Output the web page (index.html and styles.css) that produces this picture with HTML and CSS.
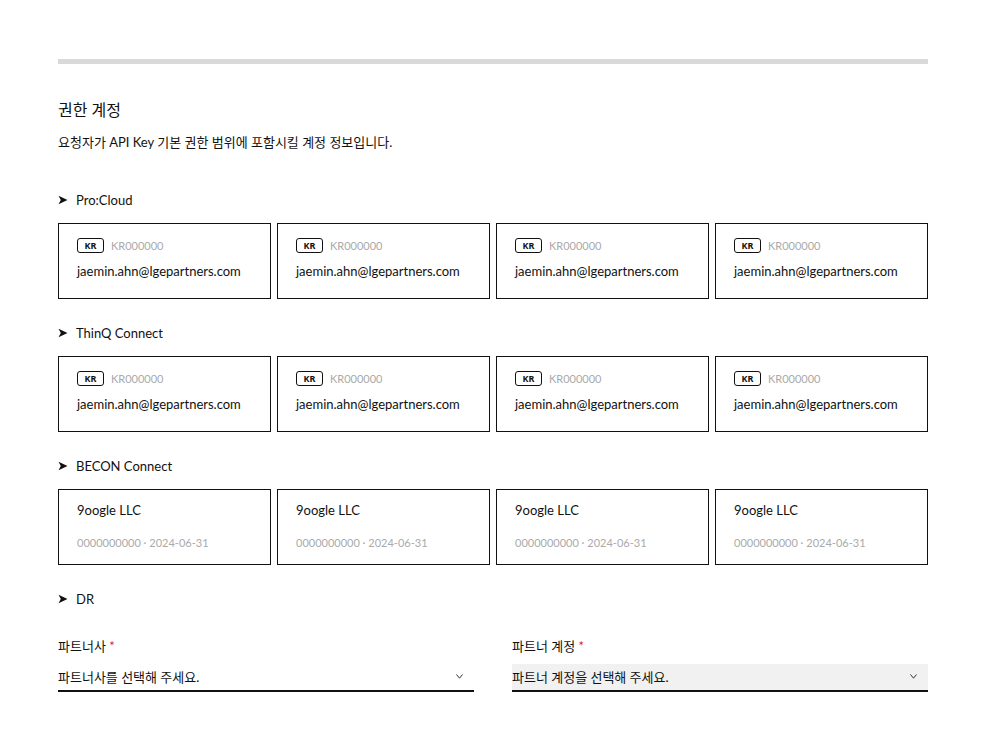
FILE: index.html
```html
<!DOCTYPE html>
<html lang="ko">
<head>
<meta charset="utf-8">
<link rel="stylesheet" href="styles.css">
</head>
<body>
<div class="page">
  <div class="topbar"></div>
  <h2 class="title">권한 계정</h2>
  <p class="desc">요청자가 API Key 기본 권한 범위에 포함시킬 계정 정보입니다.</p>

  <section class="group">
    <div class="group-label"><svg class="arrow" viewBox="0 0 10 10"><path d="M0.5 0.8 L9.5 5 L0.5 9.2 L2.8 5 Z"/></svg>Pro:Cloud</div>
    <div class="cards">
      <div class="card"><div class="meta-row"><span class="badge">KR</span><span class="code">KR000000</span></div><div class="email">jaemin.ahn@lgepartners.com</div></div>
      <div class="card"><div class="meta-row"><span class="badge">KR</span><span class="code">KR000000</span></div><div class="email">jaemin.ahn@lgepartners.com</div></div>
      <div class="card"><div class="meta-row"><span class="badge">KR</span><span class="code">KR000000</span></div><div class="email">jaemin.ahn@lgepartners.com</div></div>
      <div class="card"><div class="meta-row"><span class="badge">KR</span><span class="code">KR000000</span></div><div class="email">jaemin.ahn@lgepartners.com</div></div>
    </div>
  </section>

  <section class="group">
    <div class="group-label"><svg class="arrow" viewBox="0 0 10 10"><path d="M0.5 0.8 L9.5 5 L0.5 9.2 L2.8 5 Z"/></svg>ThinQ Connect</div>
    <div class="cards">
      <div class="card"><div class="meta-row"><span class="badge">KR</span><span class="code">KR000000</span></div><div class="email">jaemin.ahn@lgepartners.com</div></div>
      <div class="card"><div class="meta-row"><span class="badge">KR</span><span class="code">KR000000</span></div><div class="email">jaemin.ahn@lgepartners.com</div></div>
      <div class="card"><div class="meta-row"><span class="badge">KR</span><span class="code">KR000000</span></div><div class="email">jaemin.ahn@lgepartners.com</div></div>
      <div class="card"><div class="meta-row"><span class="badge">KR</span><span class="code">KR000000</span></div><div class="email">jaemin.ahn@lgepartners.com</div></div>
    </div>
  </section>

  <section class="group">
    <div class="group-label"><svg class="arrow" viewBox="0 0 10 10"><path d="M0.5 0.8 L9.5 5 L0.5 9.2 L2.8 5 Z"/></svg>BECON Connect</div>
    <div class="cards">
      <div class="card company"><div class="company-name">9oogle LLC</div><div class="company-meta">0000000000 · 2024-06-31</div></div>
      <div class="card company"><div class="company-name">9oogle LLC</div><div class="company-meta">0000000000 · 2024-06-31</div></div>
      <div class="card company"><div class="company-name">9oogle LLC</div><div class="company-meta">0000000000 · 2024-06-31</div></div>
      <div class="card company"><div class="company-name">9oogle LLC</div><div class="company-meta">0000000000 · 2024-06-31</div></div>
    </div>
  </section>

  <section class="group dr">
    <div class="group-label"><svg class="arrow" viewBox="0 0 10 10"><path d="M0.5 0.8 L9.5 5 L0.5 9.2 L2.8 5 Z"/></svg>DR</div>
    <div class="fields">
      <div class="field">
        <div class="field-label">파트너사 <span class="req">*</span></div>
        <div class="select"><span>파트너사를 선택해 주세요.</span><svg class="chev" viewBox="0 0 7 5"><path d="M0.5 0.5 L3.5 4.2 L6.5 0.5" fill="none" stroke="#333" stroke-width="1"/></svg></div>
      </div>
      <div class="field">
        <div class="field-label">파트너 계정 <span class="req">*</span></div>
        <div class="select filled"><span>파트너 계정을 선택해 주세요.</span><svg class="chev" viewBox="0 0 7 5"><path d="M0.5 0.5 L3.5 4.2 L6.5 0.5" fill="none" stroke="#333" stroke-width="1"/></svg></div>
      </div>
    </div>
  </section>
</div>
</body>
</html>
```
FILE: styles.css
```css
* { box-sizing: border-box; }
html, body { margin: 0; padding: 0; background: #fff; }
body {
  font-family: Lato, "Noto Sans CJK KR", sans-serif;
  color: #111;
}
.page {
  width: 870px;
  margin-left: 58px;
  padding-top: 59px;
}
.topbar {
  height: 5px;
  background: #d9d9d9;
}
.title {
  margin: 34px 0 0;
  font-size: 16px;
  font-weight: 400;
  line-height: 24px;
}
.desc {
  margin: 10px 0 0;
  font-size: 13px;
  line-height: 20px;
}
.group { margin-top: 38px; }
.group + .group { margin-top: 24px; }
.group-label {
  display: flex;
  align-items: center;
  font-size: 13px;
  line-height: 20px;
  height: 20px;
}
.arrow {
  width: 10px;
  height: 10px;
  margin-right: 8px;
  fill: #111;
}
.cards {
  margin-top: 13px;
  display: grid;
  grid-template-columns: repeat(4, minmax(0, 1fr));
  gap: 6px;
}
.card {
  height: 76px;
  border: 1px solid #111;
  padding: 13px 18px 0;
  min-width: 0;
}
.meta-row {
  display: flex;
  align-items: center;
  height: 16px;
}
.badge {
  display: inline-flex;
  align-items: center;
  justify-content: center;
  width: 27px;
  height: 15px;
  border: 1px solid #111;
  border-radius: 3px;
  font-family: "Noto Sans", sans-serif;
  font-size: 9px;
  font-weight: 700;
  line-height: 1;
}
.code {
  margin-left: 7px;
  font-size: 11px;
  color: #aaa;
}
.email {
  margin-top: 8px;
  font-size: 13px;
  line-height: 20px;
  white-space: nowrap;
}
.card.company { padding-top: 10px; }
.company-name {
  font-size: 13px;
  line-height: 20px;
}
.company-meta {
  margin-top: 15px;
  font-size: 11px;
  line-height: 16px;
  color: #aaa;
}
.fields {
  margin-top: 27px;
  display: flex;
  justify-content: space-between;
}
.field { width: 416px; }
.field-label {
  font-size: 13px;
  line-height: 20px;
}
.req { color: #e0202a; }
.select {
  margin-top: 8px;
  height: 28px;
  border-bottom: 2px solid #111;
  display: flex;
  align-items: center;
  justify-content: space-between;
  font-size: 13px;
  padding-right: 11px;
  padding-bottom: 2px;
}
.select.filled { background: #f1f1f1; }
.chev { width: 7px; height: 5px; }
```
